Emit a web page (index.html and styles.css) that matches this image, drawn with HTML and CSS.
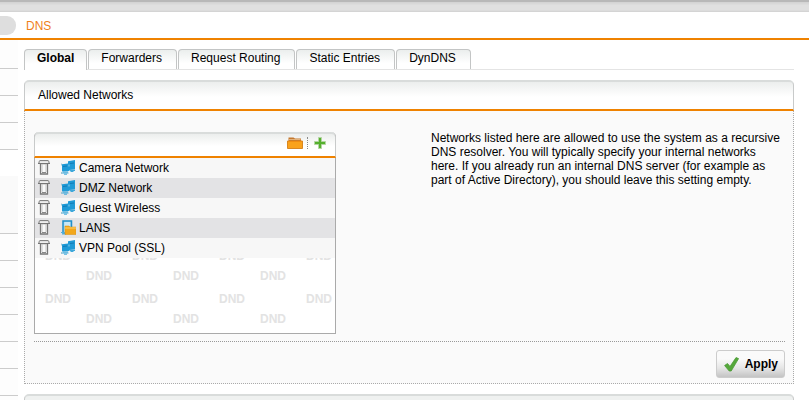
FILE: index.html
```
<!DOCTYPE html>
<html lang="en">
<head>
<meta charset="utf-8">
<title>DNS</title>
<link rel="stylesheet" href="styles.css">
</head>
<body>
<svg class="sprite" aria-hidden="true">
  <symbol id="trash" viewBox="0 0 12 15">
    <path d="M2.500 3.500h7v10.500h-7z" fill="#fafafa" stroke="#777" stroke-width="1.300"/>
    <path d="M4 4v8M8 4v8" stroke="#c4c4c4"/>
    <path d="M4 12.500h4" stroke="#888"/>
    <path d="M1 3V1.500L2 .6h8l1 .9V3" fill="#eee" stroke="#777"/>
    <path d="M0 3.500h3M9 3.500h3" stroke="#777"/>
  </symbol>
  <symbol id="host" viewBox="0 0 15 15">
    <path d="M7 1.200 14 0v9.500l-6 .5H7z" fill="#1f9ad6"/>
    <path d="M1 4.200 7 3.400h1.500V11L1 11.500z" fill="#1f9ad6"/>
    <path d="M7.500 4.500h1v2h-1z" fill="#8fcdec"/>
    <path d="M9 3.500l4-.5M2 6.500l4-.5" stroke="#1273ab" stroke-width=".8"/>
    <path d="M9 10.500h5M9.500 11.500h3M1 13h6.500M3 14.200h3M2 12h5" stroke="#3fa8da"/>
    <path d="M.5 3.500v2M.5 12v2" stroke="#9fc3d3"/>
  </symbol>
  <symbol id="group" viewBox="0 0 15 15">
    <path d="M2 1h8.500v12H2z" fill="#a9d8ef" stroke="#1f8fca" stroke-width="1.500"/>
    <path d="M3.500 3h5.500M3.500 5h5.500" stroke="#e8f6fc"/>
    <path d="M0 12.500h5M1 14h4" stroke="#4faedb"/>
    <path d="M4 6h4l1 1h6v7.500H4z" fill="#f2a71b" stroke="#d98c10" stroke-width=".5"/>
    <path d="M4 8h11" stroke="#ffd269"/>
  </symbol>
</svg>
<header class="top">
  <div class="strip"></div>
  <div class="title-row"><span class="handle"></span><h1>DNS</h1></div>
</header>
<div class="page">
  <nav class="side" aria-label="Menu">
    <div></div><div></div><div></div><div></div>
    <div class="open"></div>
    <div></div><div></div><div></div><div></div><div></div><div></div>
  </nav>
  <main>
    <nav class="tabs" aria-label="DNS sections">
      <a class="tab active" href="#global" aria-current="page">Global</a>
      <a class="tab" href="#forwarders">Forwarders</a>
      <a class="tab" href="#routing">Request Routing</a>
      <a class="tab" href="#static">Static Entries</a>
      <a class="tab" href="#dyndns">DynDNS</a>
    </nav>
    <section class="panel" id="global">
      <h2>Allowed Networks</h2>
      <div class="panel-body">
        <div class="columns">
          <div class="box">
            <div class="box-head">
              <button class="icon" aria-label="Browse">
                <svg width="16" height="12" viewBox="0 0 16 12"><path d="M1.500 4V.5h5l1.500 1h6V4z" fill="#c4772c"/><path d="M2 2.500h11.500" stroke="#e3b27c"/><path d="M.5 4h15v7.500H.5z" fill="#faa21b" stroke="#d98722"/><path d="M1 4.500h14" stroke="#f08d12"/></svg>
              </button>
              <button class="icon add" aria-label="Add">
                <svg width="12" height="12" viewBox="0 0 12 12"><path d="M4.500.5h3v4h4v3h-4v4h-3v-4h-4v-3h4z" fill="#55b02e" stroke="#b4d5a3"/></svg>
              </button>
            </div>
            <ul class="list">
              <li><button class="icon" aria-label="Remove Camera Network"><svg width="12" height="15"><use href="#trash"/></svg></button><svg width="15" height="15"><use href="#host"/></svg><span>Camera Network</span></li>
              <li><button class="icon" aria-label="Remove DMZ Network"><svg width="12" height="15"><use href="#trash"/></svg></button><svg width="15" height="15"><use href="#host"/></svg><span>DMZ Network</span></li>
              <li><button class="icon" aria-label="Remove Guest Wireless"><svg width="12" height="15"><use href="#trash"/></svg></button><svg width="15" height="15"><use href="#host"/></svg><span>Guest Wireless</span></li>
              <li><button class="icon" aria-label="Remove LANS"><svg width="12" height="15"><use href="#trash"/></svg></button><svg width="15" height="15"><use href="#group"/></svg><span>LANS</span></li>
              <li><button class="icon" aria-label="Remove VPN Pool (SSL)"><svg width="12" height="15"><use href="#trash"/></svg></button><svg width="15" height="15"><use href="#host"/></svg><span>VPN Pool (SSL)</span></li>
            </ul>
            <svg class="drop" width="300" height="75">
              <text x="10" y="2">DND</text><text x="97" y="2">DND</text><text x="184" y="2">DND</text><text x="271" y="2">DND</text>
              <text x="51" y="22">DND</text><text x="138" y="22">DND</text><text x="225" y="22">DND</text>
              <text x="10" y="45">DND</text><text x="97" y="45">DND</text><text x="184" y="45">DND</text><text x="271" y="45">DND</text>
              <text x="51" y="65">DND</text><text x="138" y="65">DND</text><text x="225" y="65">DND</text>
            </svg>
          </div>
          <p class="help">Networks listed here are allowed to use the system as a recursive DNS resolver. You will typically specify your internal networks here. If you already run an internal DNS server (for example as part of Active Directory), you should leave this setting empty.</p>
        </div>
        <div class="actions">
          <button class="apply"><svg width="15" height="15" viewBox="0 0 15 15"><path d="M.6 8.500 3.500 6.500l2.500 3L12 .6l2.600 1L7.200 14H5.200z" fill="#55a83a" stroke="#4a9a35" stroke-width=".8"/></svg>Apply</button>
        </div>
      </div>
    </section>
    <section class="panel next"></section>
  </main>
</div>
</body>
</html>
```
FILE: styles.css
```
* { box-sizing: border-box; }
html { overflow: hidden; }
body {
  margin: 0;
  background: #fff;
  color: #000;
  font: 12px/14px "Liberation Sans", Arial, sans-serif;
}
h1, h2, p, ul { margin: 0; padding: 0; font-size: 12px; font-weight: normal; }
svg { display: block; flex: none; }
button { font: inherit; color: inherit; }
.sprite { position: absolute; width: 0; height: 0; }

.top { border-bottom: 2px solid #ef8200; }
.strip {
  height: 12px;
  border-top: 2px solid #b8b8b8;
  background: linear-gradient(#d2d2d2, #e0e0e0 35%, #e0e0e0 80%, #d0d0d0);
}
.title-row { display: flex; align-items: center; gap: 10px; height: 26px; padding-top: 2px; }
.handle { width: 16px; height: 19px; margin-top: -2px; border-radius: 0 9px 9px 0; background: #dedede; }
h1 { color: #ef7f1a; }

.page { display: grid; grid-template-columns: 18px minmax(0, 1fr); column-gap: 6px; height: calc(100vh - 40px); overflow: hidden; }
.side { padding-top: 2px; background: #fdfdfd; }
.side div { height: 27px; border-bottom: 1px solid #ccc; }
.side .open { height: 84px; background: linear-gradient(#fff 26px, #fafafa 26px); }
main { padding: 9px 15px 0 0; min-width: 0; }

.tabs { display: flex; gap: 1px; border-bottom: 1px solid #e4e4e4; }
.tab {
  height: 20px;
  padding: 1px 14px 0 12px;
  border: 1px solid #c3c5c5;
  border-bottom: 0;
  border-radius: 4px 4px 0 0;
  background: linear-gradient(#ebeeed, #fff 70%);
  color: #000;
  text-decoration: none;
}
.tab.active { height: 21px; margin-bottom: -1px; padding-right: 12px; font-weight: bold; }

.panel { margin-top: 10px; }
h2, .box-head {
  border: 1px solid #c8caca;
  border-top: 2px solid #d9dcdb;
  border-bottom: 2px solid #ef8200;
  border-radius: 5px 5px 0 0;
  background: linear-gradient(#eceeed, #fff 55%);
}
h2 { padding: 6px 13px 7px; }
.panel-body { padding: 21px 8px 5px 9px; border: 1px dotted #aaa; border-top: 0; background: #fafafa; }
.columns { display: flex; justify-content: space-between; padding-bottom: 7px; border-bottom: 1px dotted #999; }
.box { width: 302px; border: 1px solid #aaa; border-top: 0; border-radius: 5px 5px 0 0; background: #fff; }
.box-head { display: flex; justify-content: flex-end; align-items: center; height: 26px; margin: 0 -1px; padding: 0 9px 4px 0; }
.icon { display: flex; padding: 0; border: 0; background: none; }
.add { margin-left: 4px; padding-left: 6px; border-left: 1px dotted #888; }
.list { list-style: none; }
.list li { display: flex; align-items: center; height: 20px; padding-left: 3px; background: #f7f7f7; }
.list li:nth-child(even) { background: #e3e3e5; }
.list svg { margin-bottom: 1px; }
.list .icon { margin-right: 11px; }
.list span { margin-left: 3px; }
.drop text { fill: #e3e3e3; font-weight: bold; }
.help { width: 354px; margin-top: -1px; }
.actions { display: flex; justify-content: flex-end; padding-top: 8px; }
.apply {
  display: flex;
  align-items: center;
  gap: 6px;
  height: 28px;
  padding: 0 6px 0 7px;
  border: 1px solid #ccc;
  border-radius: 3px;
  background: linear-gradient(#fafafa 30%, #e6e6e6 65%, #c4c4c4);
  font-weight: bold;
}
.next { height: 20px; border: 1px solid #c8caca; border-top: 2px solid #d9dcdb; border-radius: 5px 5px 0 0; background: #eff1f0; }
```
